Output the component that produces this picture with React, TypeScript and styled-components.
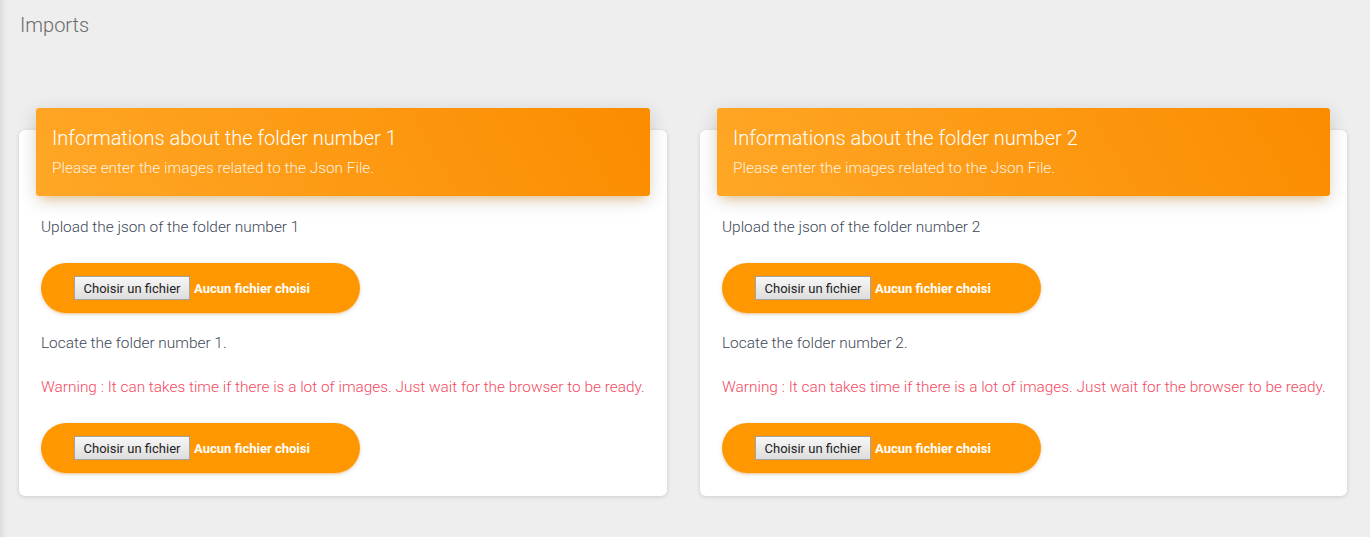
import React from "react";
import styled, { createGlobalStyle } from "styled-components";

const Global = createGlobalStyle`
  html, body { margin: 0; padding: 0; }
  body {
    font-family: Roboto, "Noto Sans", "Liberation Sans", sans-serif;
    background: #eeeeee;
  }
  * { box-sizing: border-box; }
`;

const Page = styled.div`
  min-height: 100vh;
  background: linear-gradient(to right, #dcdcdc 0px, #e8e8e8 4px, #eeeeee 9px);
  padding: 12px 23px 30px 19px;
`;

const PageTitle = styled.h1`
  margin: 0 0 0 1px;
  font-size: 20px;
  font-weight: 300;
  line-height: 26px;
  color: #6b6b6b;
`;

const Grid = styled.div`
  display: grid;
  grid-template-columns: 648px 647px;
  column-gap: 33px;
  margin-top: 92px;
`;

const Card = styled.div`
  background: #fff;
  border-radius: 6px;
  box-shadow: 0 1px 4px 0 rgba(0, 0, 0, 0.14);
  display: flex;
  flex-direction: column;
`;

const Header = styled.div`
  margin: -22px 17px 0;
  padding: 15px 16px 18px;
  border-radius: 3px;
  background: linear-gradient(60deg, #ffa726, #fb8c00);
  box-shadow: 0 4px 20px 0 rgba(0, 0, 0, 0.14), 0 7px 10px -5px rgba(255, 152, 0, 0.4);
  color: #fff;
`;

const HeaderTitle = styled.h4`
  margin: 0;
  font-size: 20px;
  font-weight: 300;
  line-height: 30px;
`;

const HeaderSub = styled.p`
  margin: 5px 0 0;
  font-size: 15.4px;
  font-weight: 300;
  line-height: 20px;
  color: rgba(255, 255, 255, 0.88);
`;

const Body = styled.div`
  padding: 21px 22px 23px;
  display: flex;
  flex-direction: column;
  align-items: flex-start;
`;

const Text = styled.p<{ $warn?: boolean; $gap: number }>`
  margin: ${(p) => p.$gap}px 0 0;
  font-size: 15.4px;
  font-weight: 300;
  line-height: 20px;
  color: ${(p) => (p.$warn ? "#f44a62" : "#3c4858")};
  white-space: nowrap;
`;

const UploadPill = styled.label<{ $gap: number }>`
  margin-top: ${(p) => p.$gap}px;
  width: 319px;
  height: 50px;
  border-radius: 25px;
  background: #ff9800;
  box-shadow: 0 2px 2px 0 rgba(255, 152, 0, 0.14), 0 3px 1px -2px rgba(255, 152, 0, 0.2),
    0 1px 5px 0 rgba(0, 0, 0, 0.12);
  display: flex;
  align-items: center;
  padding-left: 33px;
  gap: 4px;
  cursor: pointer;
`;

const FakeButton = styled.span`
  display: inline-flex;
  align-items: center;
  height: 24px;
  width: 116px;
  justify-content: center;
  background: linear-gradient(#f7f7f7, #dddddd);
  border: 1px solid #a3a3a3;
  border-radius: 1px;
  font-size: 13px;
  font-weight: 400;
  color: #222;
`;

const NoFile = styled.span`
  font-size: 13px;
  font-weight: 700;
  color: #fff;
`;

const HiddenInput = styled.input`
  display: none;
`;

function FileField({ gap }: { gap: number }) {
  return (
    <UploadPill $gap={gap}>
      <HiddenInput type="file" />
      <FakeButton>Choisir un fichier</FakeButton>
      <NoFile>Aucun fichier choisi</NoFile>
    </UploadPill>
  );
}

function FolderCard({ n }: { n: number }) {
  return (
    <Card>
      <Header>
        <HeaderTitle>Informations about the folder number {n}</HeaderTitle>
        <HeaderSub>Please enter the images related to the Json File.</HeaderSub>
      </Header>
      <Body>
        <Text $gap={0}>Upload the json of the folder number {n}</Text>
        <FileField gap={26} />
        <Text $gap={20}>Locate the folder number {n}.</Text>
        <Text $gap={24} $warn>
          Warning : It can takes time if there is a lot of images. Just wait for the browser to be ready.
        </Text>
        <FileField gap={26} />
      </Body>
    </Card>
  );
}

export default function App() {
  return (
    <>
      <Global />
      <Page>
        <PageTitle>Imports</PageTitle>
        <Grid>
          <FolderCard n={1} />
          <FolderCard n={2} />
        </Grid>
      </Page>
    </>
  );
}
